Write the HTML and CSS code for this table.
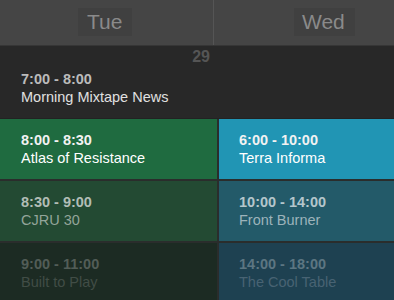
FILE: index.html
```html
<!DOCTYPE html>
<html>
<head>
<meta charset="utf-8">
<link rel="stylesheet" href="styles.css">
</head>
<body>
<div class="header">
  <div class="day day-tue"><span class="day-label">Tue</span></div>
  <div class="day day-wed"><span class="day-label">Wed</span></div>
</div>
<div class="top-row">
  <div class="top-col">
    <div class="date">29</div>
    <div class="event">
      <div class="time time-top">7:00 - 8:00</div>
      <div class="title title-top">Morning Mixtape News</div>
    </div>
  </div>
  <div class="top-col2"></div>
</div>
<div class="grid">
  <div class="cell green1">
    <div class="time">8:00 - 8:30</div>
    <div class="title">Atlas of Resistance</div>
  </div>
  <div class="cell blue1">
    <div class="time">6:00 - 10:00</div>
    <div class="title">Terra Informa</div>
  </div>
  <div class="cell green2">
    <div class="time">8:30 - 9:00</div>
    <div class="title">CJRU 30</div>
  </div>
  <div class="cell blue2">
    <div class="time">10:00 - 14:00</div>
    <div class="title">Front Burner</div>
  </div>
  <div class="cell green3">
    <div class="time">9:00 - 11:00</div>
    <div class="title">Built to Play</div>
  </div>
  <div class="cell blue3">
    <div class="time">14:00 - 18:00</div>
    <div class="title">The Cool Table</div>
  </div>
</div>
</body>
</html>
```
FILE: styles.css
```css
html, body {
  margin: 0;
  padding: 0;
}
body {
  width: 394px;
  height: 300px;
  overflow: hidden;
  background: #262626;
  font-family: "Liberation Sans", Arial, sans-serif;
}
.header {
  display: flex;
  height: 45px;
  background: #454545;
  border-bottom: 1px solid #363636;
}
.day {
  display: flex;
  align-items: flex-start;
  padding-top: 8px;
  box-sizing: border-box;
}
.day-tue {
  width: 214px;
  padding-left: 78px;
  border-right: 1px solid #555555;
}
.day-wed {
  flex: 1;
  padding-left: 80px;
}
.day-label {
  display: block;
  height: 28px;
  line-height: 28px;
  background: #404040;
  color: #8a8a8a;
  font-size: 21px;
  padding: 0 10px 0 9px;
}
.day-wed .day-label {
  padding: 0 10px 0 8px;
}
.top-row {
  display: flex;
  background: #282828;
  border-bottom: 1px solid #222222;
}
.top-col {
  width: 214px;
  padding-bottom: 12px;
}
.top-col2 {
  flex: 1;
}
.date {
  margin-top: 2px;
  text-align: right;
  padding-right: 4px;
  font-size: 16px;
  line-height: 18px;
  font-weight: bold;
  color: #555555;
}
.event {
  margin-top: 4px;
  padding-left: 21px;
}
.time {
  font-size: 14.5px;
  line-height: 18px;
  font-weight: bold;
}
.title {
  font-size: 14.5px;
  line-height: 18px;
}
.time-top { color: #bbbbbb; }
.title-top { color: #e0e0e0; }
.grid {
  display: grid;
  grid-template-columns: 217px 1fr;
  column-gap: 2px;
  row-gap: 2px;
  background: #2a2d2c;
}
.cell {
  height: 36px;
  padding: 12px 0 12px 21px;
}
.blue1, .blue2, .blue3 {
  padding-left: 20px;
}
.green1 { background: #1f6b40; color: #ffffff; }
.green1 .time { color: #f2f2f2; }
.blue1 { background: #2195b4; color: #ffffff; }
.blue1 .time { color: #f2f2f2; }
.green2 { background: #234a33; }
.green2 .time { color: #b2bdb6; }
.green2 .title { color: #93a59a; }
.blue2 { background: #235a69; }
.blue2 .time { color: #b4c6cc; }
.blue2 .title { color: #9cb3bb; }
.green3 { background: #1c2b23; }
.green3 .time { color: #525d57; }
.green3 .title { color: #414d46; }
.blue3 { background: #1e4151; }
.blue3 .time { color: #5c7682; }
.blue3 .title { color: #486373; }
```
